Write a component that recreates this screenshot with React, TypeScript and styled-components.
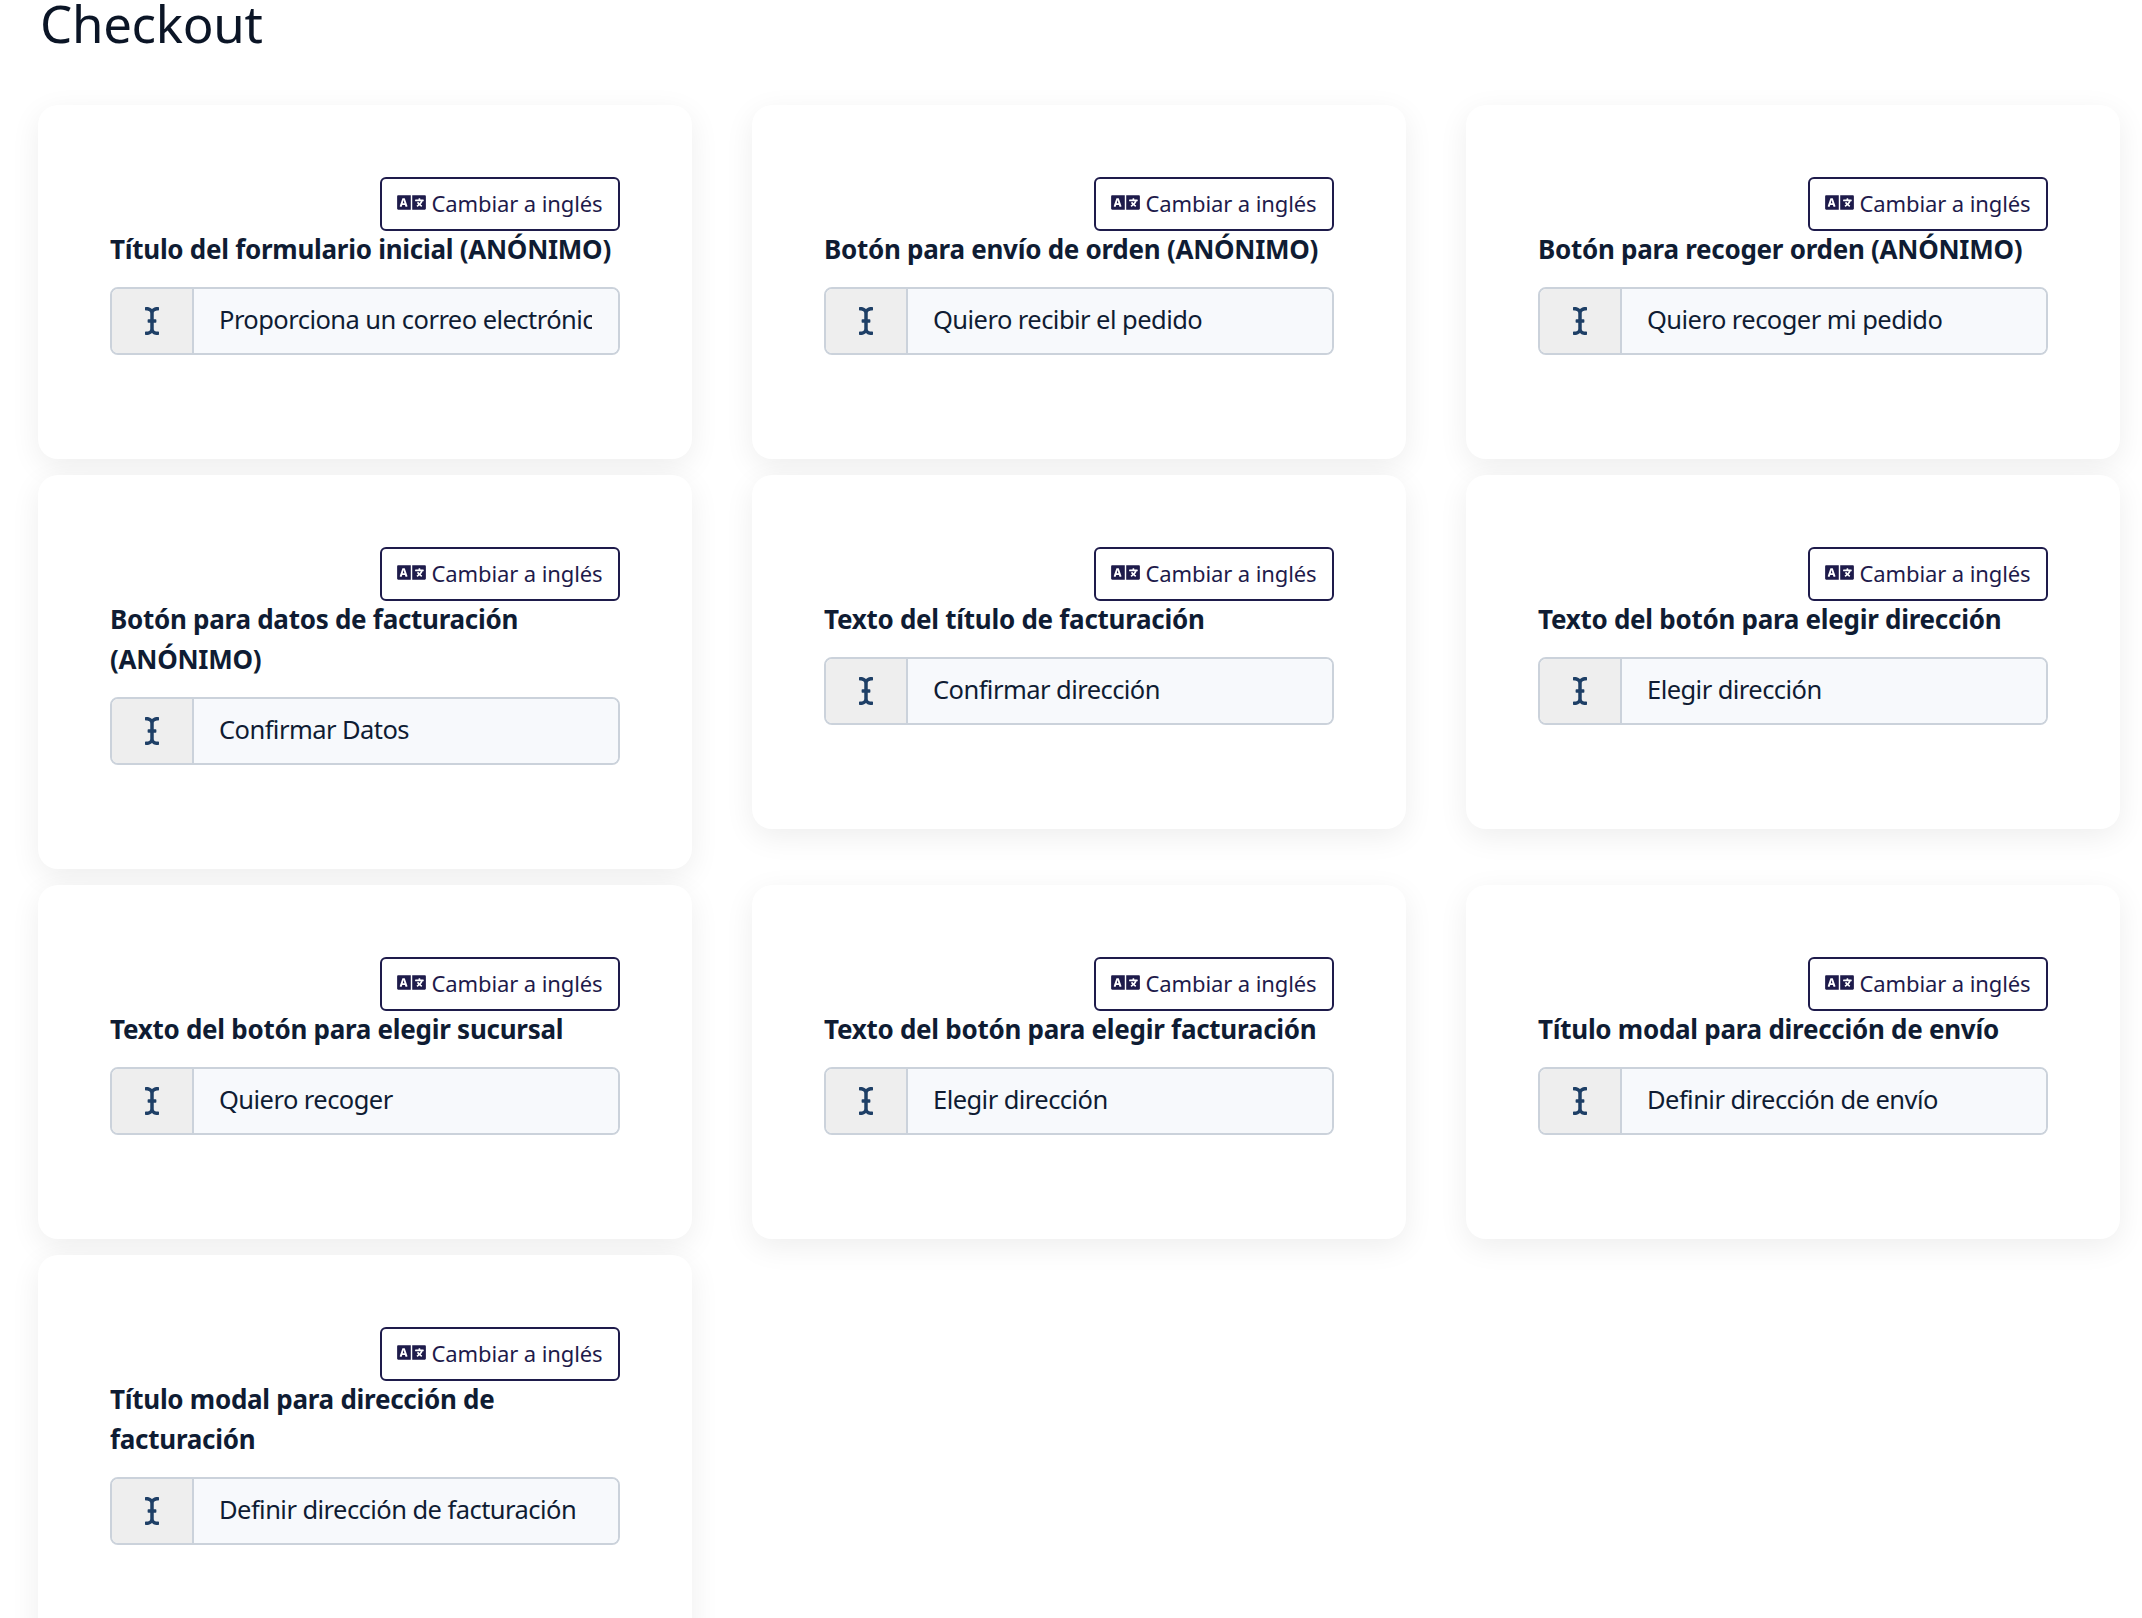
import React from "react";
import styled, { createGlobalStyle } from "styled-components";
import { FaICursor, FaLanguage } from "react-icons/fa";

const GlobalStyle = createGlobalStyle`
  html, body {
    margin: 0;
    padding: 0;
    background: #fff;
    font-family: "Noto Sans", "Open Sans", sans-serif;
  }
`;

const fields = [
  { label: "Título del formulario inicial (ANÓNIMO)", value: "Proporciona un correo electrónico" },
  { label: "Botón para envío de orden (ANÓNIMO)", value: "Quiero recibir el pedido" },
  { label: "Botón para recoger orden (ANÓNIMO)", value: "Quiero recoger mi pedido" },
  { label: "Botón para datos de facturación (ANÓNIMO)", value: "Confirmar Datos" },
  { label: "Texto del título de facturación", value: "Confirmar dirección" },
  { label: "Texto del botón para elegir dirección", value: "Elegir dirección" },
  { label: "Texto del botón para elegir sucursal", value: "Quiero recoger" },
  { label: "Texto del botón para elegir facturación", value: "Elegir dirección" },
  { label: "Título modal para dirección de envío", value: "Definir dirección de envío" },
  { label: "Título modal para dirección de facturación", value: "Definir dirección de facturación" },
];

export default function App() {
  return (
    <Page>
      <GlobalStyle />
      <Title>Checkout</Title>
      <CardGrid>
        {fields.map((field) => (
          <Card key={field.label}>
            <ButtonRow>
              <TranslateButton type="button">
                <FaLanguage />
                Cambiar a inglés
              </TranslateButton>
            </ButtonRow>
            <FieldLabel>{field.label}</FieldLabel>
            <InputGroup>
              <InputAddon>
                <FaICursor />
              </InputAddon>
              <TextInput readOnly value={field.value} />
            </InputGroup>
          </Card>
        ))}
      </CardGrid>
    </Page>
  );
}

const Page = styled.div`
  height: 1618px;
  overflow: hidden;
  box-sizing: border-box;
  padding: 0 22px 0 38px;
`;

const Title = styled.h1`
  margin: 0 0 44px;
  padding-left: 2px;
  height: 61px;
  font-size: 51px;
  line-height: 46px;
  font-weight: 400;
  color: #0b1526;
  letter-spacing: -0.3px;
`;

const CardGrid = styled.div`
  display: grid;
  grid-template-columns: repeat(3, 654px);
  column-gap: 60px;
  row-gap: 16px;
  align-items: start;
`;

const Card = styled.section`
  box-sizing: border-box;
  padding: 72px 72px 104px;
  background: #fff;
  border-radius: 20px;
  box-shadow: 0 8px 30px rgba(0, 0, 0, 0.07);
`;

const ButtonRow = styled.div`
  display: flex;
  justify-content: flex-end;
`;

const TranslateButton = styled.button`
  display: inline-flex;
  align-items: center;
  justify-content: center;
  gap: 5px;
  box-sizing: border-box;
  width: 240px;
  height: 54px;
  padding: 0 0 3px;
  background: #fff;
  border: 2px solid #1e1b4b;
  border-radius: 6px;
  color: #1e1b4b;
  font-family: inherit;
  font-size: 22px;
  letter-spacing: -0.1px;

  svg {
    width: 29px;
    height: 23px;
  }
`;

const FieldLabel = styled.div`
  margin: -2px 0 18px;
  font-size: 26px;
  line-height: 40px;
  font-weight: 700;
  color: #0f1c33;
  letter-spacing: -0.27px;
`;

const InputGroup = styled.div`
  display: flex;
  box-sizing: border-box;
  height: 68px;
  border: 2px solid #cbd2db;
  border-radius: 8px;
  overflow: hidden;
`;

const InputAddon = styled.div`
  display: flex;
  align-items: center;
  justify-content: center;
  flex: 0 0 80px;
  background: #eeeeee;
  border-right: 2px solid #cbd2db;
  color: #1e3f66;

  svg {
    width: 16px;
    height: 28px;
  }
`;

const TextInput = styled.input`
  flex: 1;
  min-width: 0;
  padding: 0 26px 5px 25px;
  border: 0;
  outline: 0;
  background: #f7f9fc;
  color: #0f1c33;
  font-family: inherit;
  font-size: 25.5px;
  letter-spacing: -0.55px;
`;
